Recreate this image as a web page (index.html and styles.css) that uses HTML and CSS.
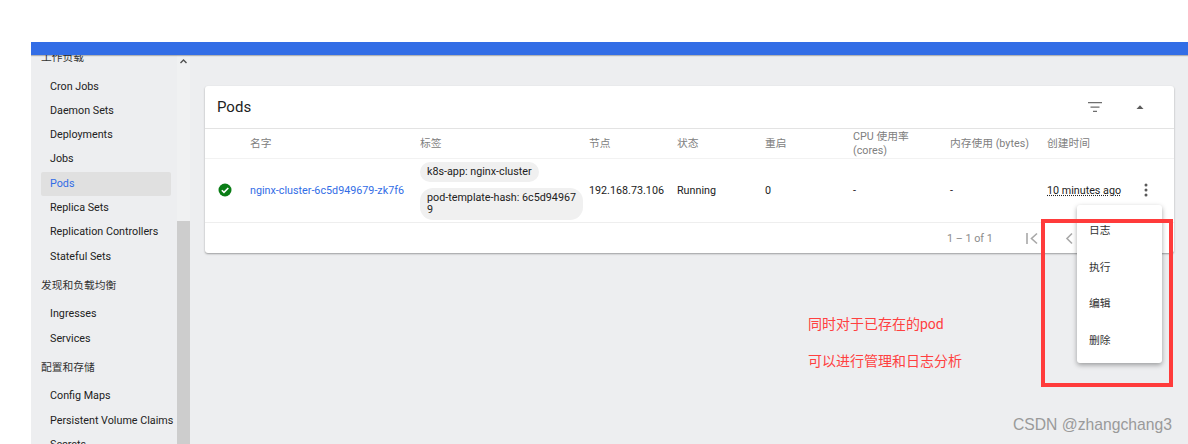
FILE: index.html
```html
<!DOCTYPE html>
<html lang="zh-CN">
<head>
    <meta charset="UTF-8">
    <meta name="viewport" content="width=device-width, initial-scale=1.0">
    <title>Pods</title>
    <link rel="stylesheet" href="styles.css">
</head>
<body>
<div class="frame">
    <div class="topbar"></div>
    <div class="layout">
        <!-- 侧边栏 -->
        <nav class="sidebar">
            <div class="nav-list">
                <div class="nav-group">工作负载</div>
                <a class="nav-item">Cron Jobs</a>
                <a class="nav-item">Daemon Sets</a>
                <a class="nav-item">Deployments</a>
                <a class="nav-item">Jobs</a>
                <a class="nav-item active">Pods</a>
                <a class="nav-item">Replica Sets</a>
                <a class="nav-item">Replication Controllers</a>
                <a class="nav-item">Stateful Sets</a>
                <div class="nav-group">发现和负载均衡</div>
                <a class="nav-item">Ingresses</a>
                <a class="nav-item">Services</a>
                <div class="nav-group">配置和存储</div>
                <a class="nav-item">Config Maps</a>
                <a class="nav-item">Persistent Volume Claims</a>
                <a class="nav-item">Secrets</a>
            </div>
        </nav>
        <div class="scrollbar">
            <svg class="scroll-up" width="13" height="13" viewBox="0 0 13 13"><path d="M3.5 8 L6.5 5 L9.5 8" fill="none" stroke="#505050" stroke-width="1.4"/></svg>
            <div class="scroll-thumb"></div>
        </div>

        <!-- 主内容 -->
        <main class="content">
            <section class="card">
                <header class="card-head">
                    <h2>Pods</h2>
                    <svg class="icon-filter" width="16" height="16" viewBox="0 0 16 16"><path d="M1 3h14v1.3H1zM3.5 7.4h9v1.3h-9zM6 11.8h4v1.3H6z" fill="#6e6e6e"/></svg>
                    <svg class="icon-collapse" width="10" height="6" viewBox="0 0 10 6"><path d="M1.5 5 L5 1.2 L8.5 5 Z" fill="#5c5c5c"/></svg>
                </header>
                <table class="pods-table">
                    <colgroup>
                        <col class="c-status"><col class="c-name"><col class="c-labels"><col class="c-node"><col class="c-state"><col class="c-restart"><col class="c-cpu"><col class="c-mem"><col class="c-time"><col class="c-more">
                    </colgroup>
                    <thead>
                    <tr>
                        <th></th>
                        <th>名字</th>
                        <th>标签</th>
                        <th>节点</th>
                        <th>状态</th>
                        <th>重启</th>
                        <th>CPU 使用率<br>(cores)</th>
                        <th>内存使用 (bytes)</th>
                        <th>创建时间</th>
                        <th></th>
                    </tr>
                    </thead>
                    <tbody>
                    <tr>
                        <td class="cell-status">
                            <svg width="14" height="14" viewBox="0 0 14 14"><circle cx="7" cy="7" r="6.5" fill="#0a7d16"/><path d="M3.8 7.2 L6 9.4 L10.3 5" fill="none" stroke="#fff" stroke-width="1.6"/></svg>
                        </td>
                        <td><a class="pod-link">nginx-cluster-6c5d949679-zk7f6</a></td>
                        <td>
                            <span class="chip">k8s-app: nginx-cluster</span>
                            <span class="chip">pod-template-hash: 6c5d94967<br>9</span>
                        </td>
                        <td>192.168.73.106</td>
                        <td>Running</td>
                        <td>0</td>
                        <td>-</td>
                        <td>-</td>
                        <td><span class="age">10 minutes ago</span></td>
                        <td class="cell-more">
                            <svg width="4" height="14" viewBox="0 0 4 14"><circle cx="2" cy="2" r="1.5" fill="#5a5a5a"/><circle cx="2" cy="7" r="1.5" fill="#5a5a5a"/><circle cx="2" cy="12" r="1.5" fill="#5a5a5a"/></svg>
                        </td>
                    </tr>
                    </tbody>
                </table>
                <footer class="card-foot">
                    <span class="range">1 – 1 of 1</span>
                    <svg class="icon-first" width="12" height="13" viewBox="0 0 12 13"><path d="M1 1v11" stroke="#a8a8a8" stroke-width="1.6"/><path d="M11 1.5 L5.5 6.5 L11 11.5" fill="none" stroke="#a8a8a8" stroke-width="1.6"/></svg>
                    <svg class="icon-prev" width="8" height="13" viewBox="0 0 8 13"><path d="M7 1.5 L2 6.5 L7 11.5" fill="none" stroke="#a8a8a8" stroke-width="1.6"/></svg>
                </footer>
            </section>
        </main>
    </div>
</div>

<!-- 操作菜单和标注 -->
<ul class="action-menu">
    <li>日志</li>
    <li>执行</li>
    <li>编辑</li>
    <li>删除</li>
</ul>
<div class="red-box"></div>
<div class="note">
    <p>同时对于已存在的pod</p>
    <p>可以进行管理和日志分析</p>
</div>
<div class="watermark">CSDN @zhangchang3</div>
</body>
</html>
```

FILE: styles.css
```css
/* 基本样式 */
html, body {
    height: 444px;
    overflow: hidden;
}
body {
    margin: 0;
    background-color: #fff;
    font-family: Roboto, "Noto Sans CJK SC", sans-serif;
    font-size: 10.75px;
    color: #222;
}

.frame {
    height: 402px;
    margin: 42px 0 0 31px;
    display: flex;
    flex-direction: column;
    background-color: #edeef0;
    overflow: hidden;
}
.topbar {
    height: 13px;
    flex: none;
    background-color: #326de6;
    box-shadow: 0 1px 1px rgba(0, 0, 0, 0.25);
    position: relative;
    z-index: 1;
}
.layout {
    flex: 1;
    display: flex;
    min-height: 0;
}

/* 侧边栏 */
.sidebar {
    width: 146px;
    flex: none;
    overflow: hidden;
}
.nav-list {
    margin-top: -14px;
    padding-left: 10px;
}
.nav-group {
    height: 33.5px;
    line-height: 33.5px;
    color: #333;
}
.nav-item {
    display: block;
    width: 121px;
    height: 24.3px;
    line-height: 24.3px;
    padding-left: 9px;
    white-space: nowrap;
    color: #222;
    border-radius: 2px;
}
.nav-item.active {
    background-color: #e0e0e0;
    color: #326de6;
}
.scrollbar {
    width: 13px;
    flex: none;
    background-color: #f0f1f2;
    display: flex;
    flex-direction: column;
}
.scroll-up {
    display: block;
}
.scroll-thumb {
    margin-top: 153px;
    flex: 1;
    background-color: #cdcdcd;
}

/* 主内容 */
.content {
    flex: 1;
    min-width: 0;
    padding: 31px 14px 0 15px;
}
.card {
    background-color: #fff;
    border-radius: 3px;
    box-shadow: 0 1px 2px rgba(0, 0, 0, 0.35);
}
.card-head {
    height: 42px;
    display: flex;
    align-items: center;
    padding-left: 12px;
    border-bottom: 1px solid #e3e3e3;
}
.card-head h2 {
    margin: 0;
    flex: 1;
    font-size: 15px;
    font-weight: 400;
    color: #222;
}
.icon-filter {
    margin-right: 32px;
}
.icon-collapse {
    margin-right: 29px;
}

/* 表格 */
.pods-table {
    width: 969px;
    border-collapse: collapse;
    table-layout: fixed;
}
.c-status { width: 45px; }
.c-name { width: 170px; }
.c-labels { width: 169px; }
.c-node { width: 88px; }
.c-state { width: 88px; }
.c-restart { width: 88px; }
.c-cpu { width: 97px; }
.c-mem { width: 97px; }
.c-time { width: 97px; }
.c-more { width: 30px; }
.pods-table th {
    height: 28px;
    padding: 1px 0 0;
    text-align: left;
    font-weight: 400;
    line-height: 14px;
    color: #808080;
    border-bottom: 1px solid #f2f2f2;
}
.pods-table td {
    height: 62px;
    padding: 0;
    color: #222;
    border-bottom: 1px solid #eee;
}
.cell-status svg, .cell-more svg {
    display: block;
}
.cell-status svg {
    margin: -2px 0 0 13px;
}
.cell-more svg {
    margin: -1px 0 0 0;
}
.pod-link {
    color: #326de6;
}
.chip {
    display: block;
    width: fit-content;
    box-sizing: border-box;
    padding: 4px 7px;
    margin: 3px 0 6px;
    line-height: 12px;
    background-color: #f0f0f0;
    border-radius: 13px;
    white-space: nowrap;
}
.chip + .chip {
    width: 163px;
    margin-bottom: 2px;
}
.age {
    text-decoration: underline dotted;
}

/* 分頁 */
.card-foot {
    height: 30px;
    display: flex;
    align-items: center;
    color: #8c8c8c;
}
.range {
    margin-left: 742px;
}
.icon-first {
    margin-left: 33px;
}
.icon-prev {
    margin-left: 27px;
}

/* 操作菜单 */
.action-menu {
    position: absolute;
    left: 1077px;
    top: 205px;
    width: 85px;
    height: 158px;
    margin: 0;
    padding: 8px 0 0;
    box-sizing: border-box;
    list-style: none;
    background-color: #fff;
    border-radius: 3px;
    box-shadow: 0 2px 5px rgba(0, 0, 0, 0.35);
}
.action-menu li {
    height: 36.5px;
    line-height: 36.5px;
    padding-left: 12px;
    color: #333;
}
.red-box {
    position: absolute;
    left: 1041px;
    top: 219px;
    width: 124px;
    height: 160px;
    border: 4px solid #ff3b3b;
}
.note {
    position: absolute;
    left: 808px;
    top: 314px;
    color: #ff4040;
    font-size: 14px;
}
.note p {
    margin: 0 0 17px;
    line-height: 20px;
}
.watermark {
    position: absolute;
    left: 1013px;
    top: 415px;
    font-family: "Liberation Sans", sans-serif;
    font-size: 15.7px;
    line-height: 20px;
    color: #9a9a9a;
    white-space: nowrap;
}
```
